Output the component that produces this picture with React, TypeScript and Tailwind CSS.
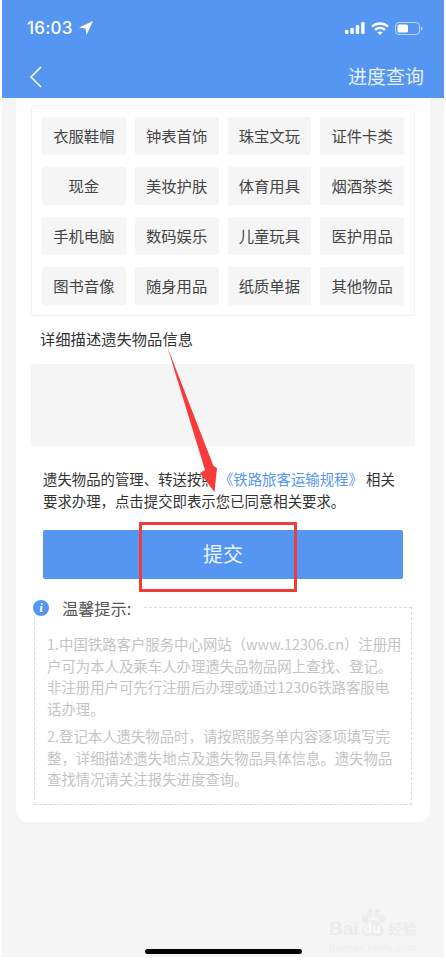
const font = { fontFamily: '"Noto Sans CJK SC", "Noto Sans", sans-serif' };

const items = ["衣服鞋帽","钟表首饰","珠宝文玩","证件卡类","现金","美妆护肤","体育用具","烟酒茶类","手机电脑","数码娱乐","儿童玩具","医护用品","图书音像","随身用品","纸质单据","其他物品"];

function StatusIcons() {
  return (
    <div className="flex items-center gap-[6px]">
      <svg width="20" height="12" viewBox="0 0 20 12" fill="white">
        <rect x="0" y="8" width="3.400" height="4" rx="1" />
        <rect x="5.400" y="6" width="3.400" height="6" rx="1" />
        <rect x="10.800" y="3" width="3.400" height="9" rx="1" />
        <rect x="16.200" y="0" width="3.400" height="12" rx="1" />
      </svg>
      <svg width="18" height="13" viewBox="0 0 18 13" fill="none" stroke="white" strokeWidth="2.400">
        <path d="M1 4.600C5.600.4 12.400.4 17 4.600" />
        <path d="M4 7.900c2.900-2.500 7.100-2.500 10 0" />
        <path d="M9 13l-2.700-2.700c1.500-1.100 3.900-1.100 5.400 0z" fill="white" stroke="none" />
      </svg>
      <svg width="28" height="13" viewBox="0 0 28 13" fill="none">
        <rect x="0.500" y="0.500" width="24" height="12" rx="3.500" stroke="white" strokeOpacity="0.6" />
        <rect x="2.500" y="2.500" width="10.500" height="8" rx="1.500" fill="white" />
        <path d="M26 4.500c1 .3 1.500 1 1.500 2s-.5 1.700-1.500 2z" fill="white" fillOpacity="0.6" />
      </svg>
    </div>
  );
}

export default function App() {
  return (
    <div className="relative h-[961px] w-[446px] overflow-hidden bg-white" style={font}>
      <div className="mx-[2px] flex h-[957px] flex-col bg-[#f5f5f5]">
        <header className="flex h-[98px] shrink-0 flex-col bg-[#5596f3] text-white">
          <div className="flex h-[56px] items-center justify-between pl-[25px] pr-[21px]">
            <div className="flex items-center gap-[6px]">
              <span className="text-[17px] font-medium leading-none tracking-[0.2px]" style={{ fontFamily: 'Inter, "Noto Sans", sans-serif' }}>16:03</span>
              <svg width="14" height="14" viewBox="0 0 14 14" fill="white"><path d="M14 0L0 6.500l6.500 1L7.500 14z" /></svg>
            </div>
            <StatusIcons />
          </div>
          <div className="flex flex-1 items-start justify-between pl-[26px] pr-[20px] pt-[6px]">
            <svg width="16" height="24" viewBox="0 0 16 24" fill="none" stroke="white" strokeWidth="1.600" className="mt-[3px]"><path d="M13 2L3 12l10 10" /></svg>
            <span className="text-[19px] leading-[28px] text-white/85">进度查询</span>
          </div>
        </header>

        <main className="mx-[14px] flex h-[724px] flex-col rounded-b-[12px] bg-white">
          <div className="mx-[15px] mt-[7px] grid h-[211px] grid-cols-4 content-start gap-x-[9px] gap-y-[12px] rounded-[3px] border border-[#f2f2f2] pl-[10px] pr-[10px] pt-[11px]">
            {items.map((t) => (
              <div key={t} className="flex h-[38px] items-center justify-center rounded-[2px] bg-[#f5f5f5] pb-[2px] text-[15.300px] text-[#444444]">{t}</div>
            ))}
          </div>

          <div className="ml-[24px] mt-[11px] text-[15.300px] leading-[22px] text-[#333333]">详细描述遗失物品信息</div>
          <div className="mx-[15px] mt-[15px] h-[82px] shrink-0 rounded-[2px] bg-[#f5f5f5]" />

          <p className="ml-[27px] mr-[20px] mt-[22px] text-[14.400px] leading-[21.500px] text-[#333333]">
            遗失物品的管理、转送按照 <span className="text-[#5596f3]">《铁路旅客运输规程》</span> 相关<br />要求办理，点击提交即表示您已同意相关要求。
          </p>

          <button className="mx-[27px] mt-[19px] flex h-[49px] shrink-0 items-center justify-center rounded-[2px] bg-[#5596f3] pb-[2px] text-[20px] text-white/90">提交</button>

          <div className="relative mx-[18px] mt-[28px] h-[198px] shrink-0 border border-dashed border-[#d9d9d9] pl-[12px] pr-[4px] pt-[25px]">
            <div className="absolute left-[-2px] top-[-10px] flex items-center gap-[13px] bg-white pr-[12px]">
              <div className="flex h-[16px] w-[16px] items-center justify-center rounded-full bg-[#5596f3] font-serif text-[12px] font-bold italic leading-none text-white">i</div>
              <span className="text-[16.200px] leading-[20px] text-[#555555]">温馨提示:</span>
            </div>
            <p className="whitespace-nowrap text-[14.400px] leading-[21.500px] text-[#c4c4c4]">1.中国铁路客户服务中心网站（www.12306.cn）注册用<br />户可为本人及乘车人办理遗失品物品网上查找、登记。<br />非注册用户可先行注册后办理或通过12306铁路客服电<br />话办理。</p>
            <p className="mt-[6px] whitespace-nowrap text-[14.400px] leading-[21.500px] text-[#c4c4c4]">2.登记本人遗失物品时，请按照服务单内容逐项填写完<br />整，详细描述遗失地点及遗失物品具体信息。遗失物品<br />查找情况请关注报失进度查询。</p>
          </div>
        </main>
      </div>

      <div className="absolute bottom-[7px] left-[145px] h-[5px] w-[157px] rounded-full bg-black" />

      <svg className="pointer-events-none absolute left-0 top-0" width="446" height="961" viewBox="0 0 446 961" fill="none">
        <path d="M167 346L213.500 466L217 468L214.500 492L200 473L205 470z" fill="#f83a3a" />
        <rect x="140.500" y="523.500" width="155" height="67" stroke="#f03b3b" strokeWidth="3" />
      </svg>

      <div className="absolute left-[329px] top-[906px] flex h-[46px] w-[90px] flex-col text-[#ebebeb]">
        <div className="flex h-[32px] items-end">
          <span className="text-[19px] font-bold leading-[19px]" style={{ fontFamily: '"Liberation Sans", sans-serif' }}>Bai</span>
          <div className="relative ml-[-1px] h-[30px] w-[30px]">
            <svg width="30" height="30" viewBox="0 0 30 30" fill="#ececec" className="absolute left-0 top-0">
              <ellipse cx="7" cy="11" rx="3.200" ry="4" />
              <ellipse cx="12" cy="5" rx="3" ry="4.200" />
              <ellipse cx="19" cy="5" rx="3" ry="4.200" />
              <ellipse cx="24" cy="11" rx="3.200" ry="4" />
              <path d="M15 12c5 0 11 6 11 11 0 5-5 6-11 5-6 1-11 0-11-5 0-5 6-11 11-11z" />
            </svg>
            <span className="absolute bottom-[3px] left-[6px] text-[14px] font-bold leading-[14px] text-[#f9f9f9]" style={{ fontFamily: '"Liberation Sans", sans-serif' }}>du</span>
          </div>
          <span className="ml-[1px] text-[14px] font-bold leading-[19px]">经验</span>
        </div>
        <div className="mt-[4px] text-[11px] leading-[10px] tracking-[0.3px] text-[#ededed]" style={{ fontFamily: '"Liberation Serif", serif' }}>jingyan.baidu.com</div>
      </div>
    </div>
  );
}
